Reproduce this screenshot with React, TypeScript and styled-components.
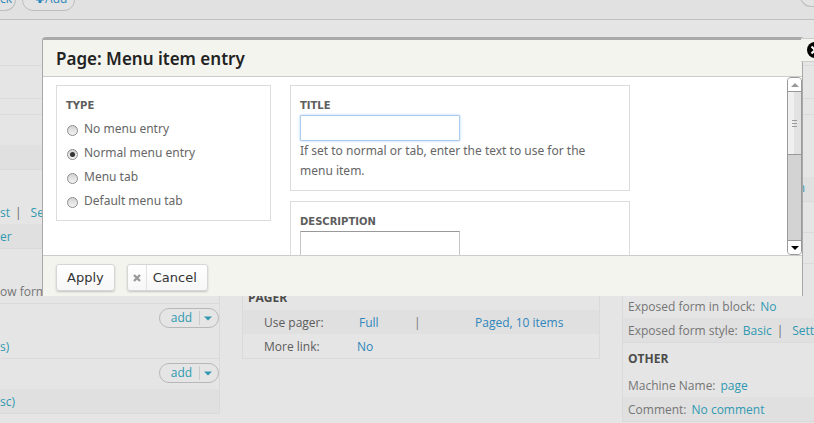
import React, { useState } from "react";
import styled, { createGlobalStyle, css } from "styled-components";

const ui = `"Noto Sans", "Open Sans", sans-serif`;
const wide = `"DejaVu Sans", "Noto Sans", sans-serif`;
const admin = `"Open Sans", "Noto Sans", sans-serif`;

const GlobalStyle = createGlobalStyle`
  *, *::before, *::after { box-sizing: border-box; }
  html, body, #root { height: 100%; }
  body { margin: 0; background: #e5e5e5; overflow: hidden; }
  button, input { font: inherit; margin: 0; }
  a { text-decoration: none; }
`;

const Page = styled.div`
  position: relative;
  min-height: 100%;
  overflow: hidden;
  background: #e5e5e5;
  color: #757575;
  font: 12px/24px ${admin};
`;

/* ---------- page behind the dialog ---------- */

const Toolbar = styled.header`
  display: flex;
  align-items: flex-end;
  gap: 6px;
  height: 20px;
  padding-bottom: 8px;
  background: #e1e1e1;
  border-bottom: 1px solid #c0c0c0;
`;

const TabButton = styled.button<{ $side?: "left" | "right" }>`
  display: flex;
  align-items: center;
  gap: 1px;
  flex: none;
  height: 22px;
  padding: 0 7px 3px 13px;
  border: 1px solid #bdbdbd;
  border-radius: 11px;
  background: #e3e3e3;
  color: #2f86bb;
  line-height: 16px;
  ${(p) =>
    p.$side === "left" &&
    css`
      padding: 0 3px 3px 0;
      border-left: 0;
      border-radius: 0 11px 11px 0;
    `}
  ${(p) =>
    p.$side === "right" &&
    css`
      width: 14px;
      margin: 0 0 4px auto;
      padding: 0;
      border-right: 0;
      border-radius: 11px 0 0 11px;
    `}
`;

const Columns = styled.main`
  display: grid;
  grid-template-columns: 220fr 358fr 192fr;
  column-gap: 22px;
  align-items: start;
`;

const Column = styled.section<{ $edge: "left" | "right" | "both"; $top: number }>`
  display: flex;
  flex-direction: column;
  min-width: 0;
  overflow: hidden;
  margin-top: ${(p) => p.$top}px;
  border: 0 solid #dadada;
  border-top-width: 1px;
  border-left-width: ${(p) => (p.$edge === "right" ? 0 : 1)}px;
  border-right-width: ${(p) => (p.$edge === "left" ? 0 : 1)}px;
`;

const Row = styled.div<{ $shade?: boolean; $line?: boolean; $h?: number; $inset?: number }>`
  display: flex;
  align-items: center;
  flex: none;
  height: ${(p) => (p.$h ?? 24) + (p.$line ? 1 : 0)}px;
  padding-top: 2px;
  padding-left: ${(p) => p.$inset ?? 0}px;
  white-space: nowrap;
  background: ${(p) => (p.$shade ? "#e0e0e0" : "transparent")};
  border-bottom: ${(p) => (p.$line ? "1px solid #dadada" : "0")};
`;

const EndRow = styled(Row)<{ $right?: number }>`
  justify-content: flex-end;
  padding-top: 0;
  padding-bottom: 2px;
  padding-right: ${(p) => p.$right ?? 0}px;
`;

const Link = styled.a<{ $blue?: boolean }>`
  color: ${(p) => (p.$blue ? "#2f86bb" : "#3099b0")};
`;

const Term = styled.span<{ $dark?: boolean }>`
  margin-right: 5px;
  color: ${(p) => (p.$dark ? "#5c5c5c" : "#757575")};
`;

const Bar = styled.span`
  margin: 0 9px 0 5px;
  color: #666;
`;

const Section = styled.h3`
  margin: 0;
  color: #4c4c4a;
  font: 700 12px/24px ${admin};
`;

const PagerGrid = styled.div<{ $first: number }>`
  display: grid;
  grid-template-columns: ${(p) => p.$first}px 55px 61px 1fr;
  width: 100%;
`;

const SplitButton = styled.div`
  display: flex;
  align-items: center;
  width: 60px;
  height: 20px;
  border: 1px solid #b8b8b8;
  border-radius: 10px;
`;

const SplitMain = styled.button`
  flex: 1;
  padding: 0 0 0 4px;
  border: 0;
  background: none;
  color: #3099b0;
  line-height: 16px;
`;

const SplitCaret = styled.button`
  display: grid;
  place-items: center;
  width: 19px;
  height: 14px;
  padding: 0 2px 0 0;
  border: 0;
  border-left: 1px solid #cbcbcb;
  background: none;
`;

/* ---------- dialog ---------- */

const Dialog = styled.section`
  position: absolute;
  z-index: 2;
  top: 37px;
  left: 42px;
  right: 11px;
  border: 1px solid #a9a9a9;
  border-top-width: 3px;
  border-bottom: 0;
  border-radius: 4px 2px 0 0;
  background: #fff;
`;

const DialogHeader = styled.header`
  padding: 7px 13px 5px;
  background: #f3f4ee;
  border-bottom: 1px solid #ccc;
`;

const DialogTitle = styled.h2`
  margin: 0;
  color: #222;
  font: 600 17px/24px ${ui};
`;

const CloseTab = styled.button`
  position: absolute;
  z-index: 3;
  top: 38px;
  right: 0;
  display: flex;
  align-items: center;
  width: 13px;
  height: 24px;
  padding: 0 0 0 6px;
  overflow: hidden;
  border: 1px solid #ccc;
  border-width: 1px 0;
  background: #f3f4ee;
  svg { flex: none; }
`;

const DialogBody = styled.div`
  display: flex;
  max-height: 178px;
  overflow: hidden;
`;

const FormGrid = styled.form`
  flex: 1;
  min-width: 0;
  display: grid;
  grid-template-columns: 215px minmax(0, 340px);
  gap: 19px;
  align-items: start;
  padding: 8px 13px 0;
  color: #666;
  font: 12px/20px ${ui};
`;

const Stack = styled.div`
  display: flex;
  flex-direction: column;
  gap: 10px;
`;

const Panel = styled.fieldset`
  display: flex;
  flex-direction: column;
  min-width: 0;
  margin: 0;
  padding: 10px 9px 9px;
  border: 1px solid #dcdcdc;
`;

const Caption = styled.label`
  display: block;
  color: #5e5e5e;
  font: 700 10px/19px ${wide};
  text-transform: uppercase;
`;

const RadioList = styled.div`
  margin: 2px 0 -2px;
`;

const RadioLabel = styled.label`
  display: flex;
  align-items: center;
  gap: 6px;
  height: 24px;
  padding-left: 1px;
`;

const Radio = styled.input`
  appearance: none;
  flex: none;
  display: grid;
  place-items: center;
  width: 11px;
  height: 11px;
  margin-top: 2px;
  border: 1px solid #8d8d8d;
  border-radius: 50%;
  background: linear-gradient(#d2d2d2, #f4f4f4);
  outline: 0;
  &:checked::before {
    content: "";
    width: 5px;
    height: 5px;
    border-radius: 50%;
    background: #333;
  }
`;

const TextInput = styled.input`
  width: 160px;
  height: 26px;
  padding: 2px 4px;
  border: 1px solid #c6c6c6;
  border-top-color: #999;
  border-radius: 0;
  background: #fff;
  outline: 0;
  &:focus {
    border-color: #a9cbee;
    border-radius: 1px;
    box-shadow: 0 0 3px #b4d4f4;
  }
`;

const Help = styled.p`
  margin: 0;
`;

const ScrollTrack = styled.div`
  display: flex;
  flex-direction: column;
  flex: none;
  width: 15px;
  height: 178px;
  border: 1px solid #999;
  border-radius: 4px;
  background: #d3d3d3;
  overflow: hidden;
`;

const ScrollArrow = styled.button`
  display: grid;
  place-items: center;
  flex: none;
  height: 13px;
  padding: 0;
  border: 0;
  background: #fff;
`;

const ScrollThumb = styled.div`
  display: grid;
  place-items: center;
  flex: none;
  height: 64px;
  border: 1px solid #999;
  border-width: 1px 0;
  background: linear-gradient(90deg, #f0f0f0 50%, #e2e2e2 50%);
`;

const ScrollGap = styled.div`
  flex: 1;
  border-bottom: 1px solid #999;
  background: #d3d3d3;
`;

const DialogFooter = styled.footer`
  display: flex;
  gap: 12px;
  padding: 8px 13px 5px;
  background: #f3f4ee;
  border-top: 1px solid #ccc;
`;

const ActionButton = styled.button`
  display: flex;
  align-items: center;
  height: 27px;
  padding: 0 10px;
  border: 1px solid #d6d6d6;
  border-radius: 3px;
  background: linear-gradient(#fff, #f7f7f7);
  box-shadow: 0 1px 2px rgba(0, 0, 0, 0.2);
  color: #333;
  font: 13px/24px ${wide};
`;

const CancelIcon = styled.span`
  display: grid;
  place-items: center;
  align-self: stretch;
  width: 19px;
  margin: 0 6px 0 -10px;
  border-right: 1px solid #e2e2e2;
`;

const options = ["No menu entry", "Normal menu entry", "Menu tab", "Default menu tab"];

function AddButton() {
  return (
    <SplitButton>
      <SplitMain type="button">add</SplitMain>
      <SplitCaret type="button" aria-label="More actions">
        <svg width="8" height="5" viewBox="0 0 8 5">
          <path d="M0 0.5h8L4 4.5z" fill="#3099b0" />
        </svg>
      </SplitCaret>
    </SplitButton>
  );
}

export default function App() {
  const [type, setType] = useState(options[1]);

  return (
    <Page>
      <GlobalStyle />
      <Toolbar>
        <TabButton $side="left">ck</TabButton>
        <TabButton>
          <svg width="8" height="8" viewBox="0 0 8 8">
            <path d="M2.500 0h3v2.500H8v3H5.500V8h-3V5.500H0v-3h2.500z" fill="#2f86bb" />
          </svg>
          Add
        </TabButton>
        <TabButton $side="right" aria-label="View actions" />
      </Toolbar>

      <Columns>
        <Column $edge="right" $top={45}>
          <Row $h={32} $line />
          <Row $h={15} $line />
          <Row $h={30} />
          <Row $shade $line />
          <Row $h={30} />
          <Row>
            <Link href="#list">st</Link>
            <Bar>|</Bar>
            <Link href="#settings">Settings</Link>
          </Row>
          <Row $shade $line>
            <Link href="#filter">er</Link>
          </Row>
          <Row $h={30} />
          <Row $line>ow form</Row>
          <EndRow $h={30}>
            <AddButton />
          </EndRow>
          <Row $line>
            <Link href="#posts">s)</Link>
          </Row>
          <EndRow $h={30}>
            <AddButton />
          </EndRow>
          <Row $shade $line>
            <Link href="#sort">sc)</Link>
          </Row>
        </Column>

        <Column $edge="both" $top={262}>
          <Row $h={27} $inset={5}>
            <Section>PAGER</Section>
          </Row>
          <Row $shade $inset={21}>
            <PagerGrid $first={95}>
              <Term $dark>Use pager:</Term>
              <Link $blue href="#full">Full</Link>
              <span>|</span>
              <Link $blue href="#paged">Paged, 10 items</Link>
            </PagerGrid>
          </Row>
          <Row $line $inset={21}>
            <PagerGrid $first={93}>
              <Term $dark>More link:</Term>
              <Link $blue href="#more">No</Link>
            </PagerGrid>
          </Row>
        </Column>

        <Column $edge="left" $top={45}>
          <Row $h={32} $line />
          <Row $h={15} $line />
          <Row $h={62} />
          <EndRow $shade $line $right={9}>
            <Link href="#permission">n</Link>
          </EndRow>
          <Row $h={30} $line />
          <Row $h={30} $line />
          <Row $h={30} />
          <Row $inset={5}>
            <Term>Exposed form in block:</Term>
            <Link href="#block">No</Link>
          </Row>
          <Row $shade $line $inset={5}>
            <Term>Exposed form style:</Term>
            <Link href="#style">Basic</Link>
            <Bar>|</Bar>
            <Link href="#style-settings">Settings</Link>
          </Row>
          <Row $h={30} $inset={5}>
            <Section>OTHER</Section>
          </Row>
          <Row $inset={5}>
            <Term>Machine Name:</Term>
            <Link href="#name">page</Link>
          </Row>
          <Row $shade $line $inset={5}>
            <Term>Comment:</Term>
            <Link href="#comment">No comment</Link>
          </Row>
        </Column>
      </Columns>

      <Dialog role="dialog" aria-labelledby="dialog-title">
        <DialogHeader>
          <DialogTitle id="dialog-title">Page: Menu item entry</DialogTitle>
        </DialogHeader>
        <DialogBody>
          <FormGrid>
            <Panel aria-labelledby="type-caption">
              <Caption as="span" id="type-caption">Type</Caption>
              <RadioList>
                {options.map((o) => (
                  <RadioLabel key={o}>
                    <Radio type="radio" name="type" checked={type === o} onChange={() => setType(o)} />
                    {o}
                  </RadioLabel>
                ))}
              </RadioList>
            </Panel>
            <Stack>
              <Panel>
                <Caption htmlFor="item-title">Title</Caption>
                <TextInput id="item-title" type="text" autoFocus />
                <Help>If set to normal or tab, enter the text to use for the menu item.</Help>
              </Panel>
              <Panel>
                <Caption htmlFor="item-description">Description</Caption>
                <TextInput id="item-description" type="text" />
              </Panel>
            </Stack>
          </FormGrid>
          <ScrollTrack>
            <ScrollArrow type="button" aria-label="Scroll up">
              <svg width="8" height="4" viewBox="0 0 8 4">
                <path d="M4 0l4 4H0z" fill="#999" />
              </svg>
            </ScrollArrow>
            <ScrollThumb>
              <svg width="5" height="7" viewBox="0 0 5 7" shapeRendering="crispEdges">
                <path d="M0 .5h5M0 3.5h5M0 6.5h5" stroke="#999" />
              </svg>
            </ScrollThumb>
            <ScrollGap />
            <ScrollArrow type="button" aria-label="Scroll down">
              <svg width="8" height="4" viewBox="0 0 8 4">
                <path d="M0 0h8L4 4z" fill="#000" />
              </svg>
            </ScrollArrow>
          </ScrollTrack>
        </DialogBody>
        <DialogFooter>
          <ActionButton type="button">Apply</ActionButton>
          <ActionButton type="button">
            <CancelIcon>
              <svg width="8" height="8" viewBox="0 0 8 8">
                <path d="M1 1l6 6M7 1L1 7" stroke="#999" strokeWidth="2.4" />
              </svg>
            </CancelIcon>
            Cancel
          </ActionButton>
        </DialogFooter>
      </Dialog>
      <CloseTab type="button" aria-label="Close">
        <svg width="16" height="16" viewBox="0 0 16 16">
          <circle cx="8" cy="8" r="8" fill="#000" />
          <path d="M4.5 4.5l7 7M11.5 4.5l-7 7" stroke="#fff" strokeWidth="2.2" />
        </svg>
      </CloseTab>
    </Page>
  );
}
